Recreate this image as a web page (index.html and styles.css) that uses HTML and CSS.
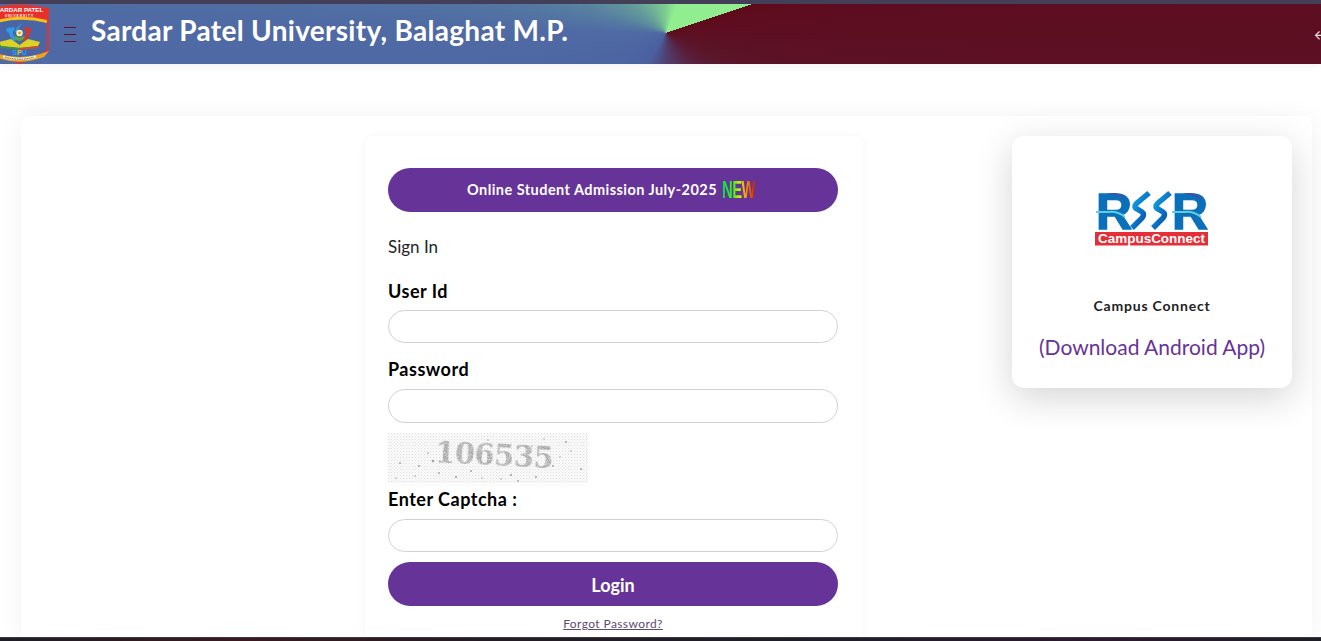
FILE: index.html
```html
<!DOCTYPE html>
<html lang="en">
<head>
<meta charset="utf-8">
<title>Sardar Patel University, Balaghat M.P.</title>
<link rel="stylesheet" href="styles.css">
</head>
<body>
<div class="topstrip"></div>
<header class="header">
  <svg class="crest" viewBox="0 0 60 60" aria-hidden="true">
    <path d="M1 4 Q29.5 -3 59 4 L59 44 Q58 48 53 50 L29.5 60 L6 50 Q1 48 1 44 Z" fill="#e8302a"/>
    <path d="M3 18 Q29.5 10 57 18 L57 44 Q56 47 52 49 L29.5 58 L8 49 Q3 47 3 44 Z" fill="#4a65a3"/>
    <path d="M3 17 Q29.5 9 57 16 L57 19 Q29.5 12 3 20 Z" fill="#f6c21c"/>
    <text class="crest-a" x="29.5" y="8.2" text-anchor="middle">SARDAR PATEL</text>
    <text class="crest-b" x="29.5" y="12.6" text-anchor="middle">UNIVERSITY</text>
    <path d="M22 23 Q15 29 24 37 L27 36 Q20 30 25 24 Z" fill="#2f9be8"/>
    <circle cx="19" cy="26" r="2.6" fill="#2f9be8"/>
    <path d="M33 19 Q26 22 25 28 L27 28 Q28 23 33 19 Z" fill="#2f9be8"/>
    <path d="M36 23 Q44 29 35 37 L32 36 Q39 30 34 24 Z" fill="#d9342c"/>
    <circle cx="38.5" cy="26" r="2.6" fill="#d9342c"/>
    <circle cx="29.5" cy="29" r="3.2" fill="#fff2b0"/>
    <circle cx="29.5" cy="29" r="1.4" fill="#c9a23a"/>
    <path d="M24 33 Q29.5 41 35 33 Q33 31 29.5 34 Q26 31 24 33 Z" fill="#58a83c"/>
    <path d="M9 38 L21 35 L29.5 41 L29.5 44 L11 42 Z" fill="#d9d326"/>
    <path d="M50 38 L38 35 L29.5 41 L29.5 44 L48 42 Z" fill="#d9d326"/>
    <path d="M11 42 L29.5 44 L29.5 46 L10 44 Z" fill="#3a8f4b"/>
    <path d="M48 42 L29.5 44 L29.5 46 L49 44 Z" fill="#d64a2a"/>
    <text class="crest-c" x="29.5" y="51" text-anchor="middle"><tspan fill="#1fa0ff">S</tspan><tspan fill="#d8c83a">P</tspan><tspan fill="#1fa0ff">U</tspan></text>
    <path d="M9 50 Q29.5 56 50 50 L59 47 L54 53 Q29.5 62 8 54 Z" fill="#e6a526"/>
    <path d="M13 52.5 Q29.5 57.5 46 52.5" fill="none" stroke="#f6e9c0" stroke-width="2.6"/>
    <path d="M15 53 Q29.5 57.6 44 53" fill="none" stroke="#444" stroke-width=".8" stroke-dasharray="1.6 .8"/>
  </svg>
  <button class="burger" type="button" aria-label="Menu"><span></span><span></span><span></span></button>
  <h1 class="title">Sardar Patel University, Balaghat M.P.</h1>
  <span class="exit">←</span>
</header>

<main class="page">
  <section class="panel">
    <div class="login">
      <a class="pill pill-notice" href="#">Online Student Admission July-2025 <span class="new">NEW</span></a>
      <p class="signin">Sign In</p>
      <label class="label label-first" for="uid">User Id</label>
      <input class="field" id="uid" type="text">
      <label class="label label-next" for="pwd">Password</label>
      <input class="field" id="pwd" type="password">
      <svg class="captcha" viewBox="0 0 200 50" aria-label="Captcha image">
        <defs>
          <pattern id="dots" width="3" height="3" patternUnits="userSpaceOnUse">
            <rect width="3" height="3" fill="#fbfbfb"/>
            <rect width="1" height="1" fill="#dcdcdc"/>
            <rect x="1.5" y="1.5" width="1" height="1" fill="#e6e6e6"/>
          </pattern>
          <filter id="grain" x="0" y="0" width="100%" height="100%">
            <feTurbulence type="fractalNoise" baseFrequency="1.1" numOctaves="2" seed="4" result="n"/>
            <feColorMatrix in="n" type="matrix" values="0 0 0 0 1  0 0 0 0 1  0 0 0 0 1  0 0 0 -2.2 1.35" result="w"/>
            <feComposite in="SourceGraphic" in2="w" operator="out"/>
          </filter>
        </defs>
        <rect width="200" height="50" fill="url(#dots)"/>
        <g fill="#a2a2a2">
          <circle cx="12" cy="30" r="1"/><circle cx="31" cy="33" r="1.1"/><circle cx="45" cy="28" r="1.3"/><circle cx="51" cy="40" r=".9"/><circle cx="27" cy="43" r=".8"/><circle cx="68" cy="44" r="1.1"/><circle cx="83" cy="38" r="1"/><circle cx="123" cy="42" r="1.1"/><circle cx="130" cy="48" r=".9"/><circle cx="148" cy="44" r="1"/><circle cx="178" cy="9" r="1"/><circle cx="193" cy="36" r="1"/><circle cx="183" cy="18" r=".8"/><circle cx="144" cy="13" r=".8"/><circle cx="58" cy="12" r=".9"/><circle cx="100" cy="7" r=".8"/><circle cx="165" cy="33" r="1"/><circle cx="8" cy="45" r=".8"/><circle cx="40" cy="20" r=".8"/><circle cx="172" cy="24" r=".8"/><circle cx="113" cy="46" r=".8"/><circle cx="94" cy="45" r=".7"/><circle cx="156" cy="6" r=".7"/>
        </g>
        <text class="captcha-text" x="47" y="32" transform="rotate(3 100 25)" filter="url(#grain)">106535</text>
      </svg>
      <label class="label label-captcha" for="cap">Enter Captcha :</label>
      <input class="field field-captcha" id="cap" type="text">
      <button class="pill pill-login" type="button">Login</button>
      <a class="forgot" href="#">Forgot Password?</a>
    </div>

    <aside class="app">
      <svg class="rsr" viewBox="0 0 114 56" aria-label="RSR CampusConnect logo">
        <defs>
          <linearGradient id="sa" x1="0" y1="0" x2="1" y2="1">
            <stop offset="0" stop-color="#12b3e6"/><stop offset=".55" stop-color="#0a6fc4"/><stop offset="1" stop-color="#0b3f9a"/>
          </linearGradient>
        </defs>
        <text class="rsr-r" x="1" y="37" textLength="36" lengthAdjust="spacingAndGlyphs">R</text>
        <text class="rsr-r" x="77" y="37" textLength="36" lengthAdjust="spacingAndGlyphs">R</text>
        <path d="M12 1 H20 Q30 2 30 9 Q27 4 18 3 Z" fill="#3a55a5"/>
        <path d="M88 1 H96 Q106 2 106 9 Q103 4 94 3 Z" fill="#3a55a5"/>
        <path d="M1 20 H14 Q22 19 30 25" class="rsr-wave"/>
        <path d="M77 20 H90 Q98 19 106 25" class="rsr-wave"/>
        <path d="M54 1 L42 11 Q38 15 42 17 L47 20 Q50 22 47 26 L37 36" class="rsr-s"/>
        <path d="M75 1 L63 11 Q59 15 63 17 L68 20 Q71 22 68 26 L58 36" class="rsr-s"/>
        <rect x="0" y="40" width="113" height="13.5" fill="#e42f38"/>
        <text class="rsr-t" x="56.5" y="50.5" text-anchor="middle" textLength="107" lengthAdjust="spacingAndGlyphs">CampusConnect</text>
      </svg>
      <h2 class="app-name">Campus Connect</h2>
      <a class="app-link" href="#">(Download Android App)</a>
    </aside>
  </section>
</main>
<div class="bottomstrip"></div>
</body>
</html>
```

FILE: styles.css
```css
* { box-sizing: border-box; }

html, body {
  margin: 0;
  height: 641px;
  overflow: hidden;
  background: #fff;
  font-family: Lato, "Open Sans", "Noto Sans", sans-serif;
}

.topstrip {
  height: 4px;
  background: #45405a;
}

.header {
  height: 60px;
  display: flex;
  align-items: center;
  overflow: hidden;
  background: conic-gradient(from 71.4deg at 666px 29px,
    #5f0a1c 0deg, #5a1428 40deg, #5a1c38 60deg,
    #4f4070 108deg, #4a60a0 140deg, #4f6aa4 200deg,
    #5b8a9e 222deg, #7fcf90 289deg, #90ee90 310deg, #90ee90 360deg);
  box-shadow: 0 2px 8px rgba(0, 0, 0, .06);
}

.crest {
  flex: none;
  width: 60px;
  height: 60px;
  margin-left: -10.5px;
}
.crest-a { font: 700 6.2px "Liberation Sans", sans-serif; fill: #fff; }
.crest-b { font: 700 3.2px "Liberation Sans", sans-serif; fill: #fff; letter-spacing: 1px; }
.crest-c { font: 800 7px "Liberation Sans", sans-serif; }

.burger {
  flex: none;
  display: flex;
  flex-direction: column;
  justify-content: space-between;
  width: 12px;
  height: 15px;
  margin: 1px 0 0 14.5px;
  padding: 0;
  border: 0;
  background: none;
}
.burger span {
  display: block;
  height: 1px;
  background: #5a1428;
}

.title {
  margin: 0 0 0 15px;
  font-size: 28px;
  font-weight: 700;
  line-height: 1;
  letter-spacing: .3px;
  color: #fff;
  white-space: nowrap;
  position: relative;
  top: -4px;
}

.exit {
  margin-left: auto;
  margin-right: -9px;
  flex: none;
  width: 16px;
  font-size: 15px;
  color: #f0d8e0;
}

.page {
  height: 577px;
  padding: 52px 9px 0 21px;
}

.panel {
  display: grid;
  grid-template-columns: 498px 280px;
  column-gap: 149px;
  align-items: start;
  height: 525px;
  padding: 20px 20px 0 344px;
  border-radius: 8px 8px 0 0;
  background: #fff;
  box-shadow: 0 0 24px rgba(0, 0, 0, .05);
}

.login {
  height: 505px;
  padding: 32px 25px 0 23px;
  border-radius: 8px 8px 0 0;
  background: #fff;
  box-shadow: 0 0 8px rgba(0, 0, 0, .04);
}

.pill {
  display: flex;
  align-items: center;
  justify-content: center;
  width: 450px;
  height: 44px;
  border: 0;
  border-radius: 22px;
  background: #663399;
  color: #fff;
  font-family: inherit;
  font-weight: 700;
  text-decoration: none;
}
.pill-notice { padding-bottom: 2px; font-size: 14.5px; letter-spacing: .45px; white-space: pre; }
.pill-login { margin-top: 10px; padding-top: 2px; font-size: 18px; }

.new {
  display: inline-block;
  margin: 2px -16px 0 1px;
  font: 700 24px "Liberation Sans", sans-serif;
  letter-spacing: -1px;
  line-height: 1;
  white-space: nowrap;
  transform: scaleX(.62);
  transform-origin: left center;
  background: linear-gradient(90deg, #00e050 0%, #40f020 35%, #d8f000 55%, #ff9000 75%, #d02000 100%);
  -webkit-background-clip: text;
  background-clip: text;
  color: transparent;
}

.signin {
  margin: 25px 0 0;
  font-size: 17px;
  line-height: 20px;
  color: #212529;
}

.label {
  display: block;
  font-size: 18px;
  font-weight: 700;
  line-height: 22px;
  letter-spacing: .5px;
  color: #000;
}
.label-first { margin-top: 23px; }
.label-next { margin-top: 15px; }
.label-captcha { margin-top: 5px; }

.field {
  display: block;
  width: 450px;
  height: 33px;
  margin-top: 8px;
  border: 1px solid #d2d2d2;
  border-radius: 17px;
  background: #fff;
}
#pwd { margin-top: 9px; height: 34px; }
.field-captcha { margin-top: 9px; }

.captcha {
  display: block;
  width: 200px;
  height: 50px;
  margin-top: 10px;
}
.captcha-text {
  font: 700 29px "DejaVu Serif", serif;
  letter-spacing: -.5px;
  fill: #a4a4a4;
}

.forgot {
  display: block;
  width: 450px;
  margin-top: 10px;
  font-size: 12px;
  line-height: 16px;
  letter-spacing: .4px;
  text-align: center;
  color: #5c4a78;
}

.app {
  display: flex;
  flex-direction: column;
  align-items: center;
  height: 252px;
  border-radius: 12px;
  background: #fff;
  box-shadow: 0 10px 36px rgba(0, 0, 0, .17);
}

.rsr {
  width: 114px;
  height: 56px;
  margin-top: 56px;
  overflow: visible;
}
.rsr-r { font: 700 50px "Liberation Sans", sans-serif; fill: #0a70bb; stroke: #0a70bb; stroke-width: 1.4; }
.rsr-wave { fill: none; stroke: #5fd0d8; stroke-width: 2; }
.rsr-s { fill: none; stroke: url(#sa); stroke-width: 5.5; }
.rsr-t { font: 700 12.5px "Liberation Sans", sans-serif; fill: #fff; }

.app-name {
  margin: 49px 0 0;
  font-size: 14px;
  font-weight: 700;
  line-height: 18px;
  letter-spacing: .8px;
  color: #222;
}

.app-link {
  margin-top: 18px;
  font-size: 21px;
  line-height: 28px;
  color: #663399;
  text-decoration: none;
  white-space: nowrap;
}

.bottomstrip {
  position: fixed;
  left: 0;
  right: 0;
  bottom: 0;
  height: 4px;
  border-top: 1px solid #3a3a40;
  background: linear-gradient(90deg, #1e1e26 0, #3a1a1e 240px, #241c24 480px, #1e1e28 800px, #2c1a2e 1100px, #1e1e26 1321px);
}
```
